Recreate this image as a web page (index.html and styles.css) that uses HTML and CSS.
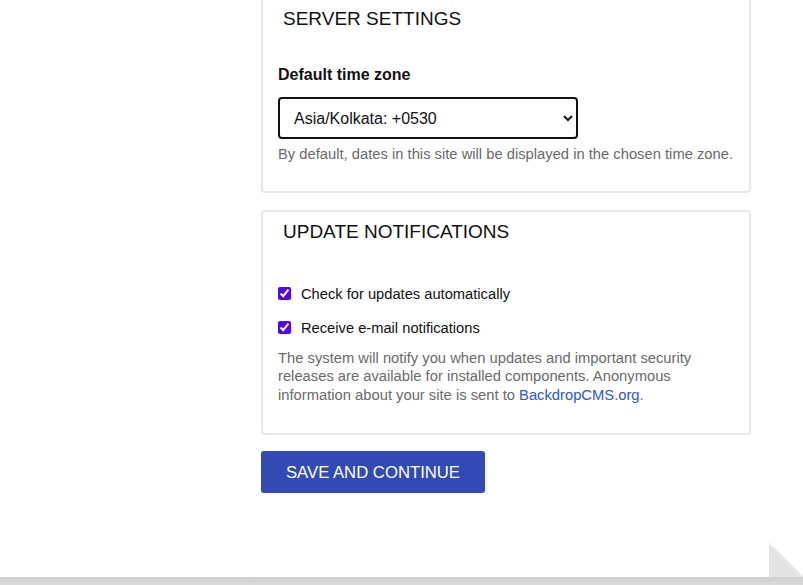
FILE: index.html
```html
<!DOCTYPE html>
<html lang="en">
<head>
<meta charset="utf-8">
<title>Backdrop installer</title>
<link rel="stylesheet" href="styles.css">
</head>
<body>
<div class="page">
  <main class="content">
    <form class="form">
      <div class="panel panel-first">
        <div class="legend">SERVER SETTINGS</div>
        <div class="field">
          <label class="field-label" for="tz">Default time zone</label>
          <select id="tz" class="select">
            <option>Asia/Kolkata: +0530</option>
          </select>
          <p class="desc">By default, dates in this site will be displayed in the chosen time zone.</p>
        </div>
      </div>
      <div class="panel panel-second">
        <div class="legend">UPDATE NOTIFICATIONS</div>
        <div class="checks">
          <label class="check"><input type="checkbox" checked> <span>Check for updates automatically</span></label>
          <label class="check"><input type="checkbox" checked> <span>Receive e-mail notifications</span></label>
        </div>
        <p class="desc desc-notify">The system will notify you when updates and important security releases are available for installed components. Anonymous information about your site is sent to <a href="#" class="link">BackdropCMS.org</a>.</p>
      </div>
      <div class="actions">
        <button type="button" class="btn">SAVE AND CONTINUE</button>
      </div>
    </form>
  </main>
  <footer class="page-bottom">
    <div class="corner-row"><div class="corner"></div></div>
    <div class="bottom-bar"></div>
  </footer>
</div>
</body>
</html>
```

FILE: styles.css
```css
* { box-sizing: border-box; }
html, body { margin: 0; padding: 0; }
body {
  background: #fff;
  font-family: "Liberation Sans", Arial, sans-serif;
  color: #111;
  overflow: hidden;
}
.page {
  height: 585px;
  display: flex;
  flex-direction: column;
}
.content {
  flex: 1;
  padding-left: 261px;
  width: 751px;
}
.form { margin-top: -3px; }
.panel {
  width: 490px;
  border: 2px solid #e8e8e8;
  border-radius: 4px;
  padding: 8px 15px 0 15px;
}
.panel-first { padding-top: 9px; padding-bottom: 27px; }
.panel-second { margin-top: 17px; padding-top: 9px; padding-bottom: 29px; }
.legend {
  font-size: 19px;
  line-height: 22px;
  padding-left: 5px;
  color: #111;
}
.field { margin-top: 35px; }
.field-label {
  display: block;
  font-weight: bold;
  font-size: 16px;
  line-height: 19px;
}
.select {
  display: block;
  margin-top: 13px;
  width: 300px;
  height: 42px;
  border: 2px solid #111;
  border-radius: 4px;
  background: #fff;
  font-family: "Liberation Sans", Arial, sans-serif;
  font-size: 16px;
  color: #111;
  padding: 0 10px;
}
.desc {
  margin: 6px 0 0 0;
  font-size: 14.75px;
  line-height: 18.5px;
  color: #6a6a6a;
}
.checks {
  margin-top: 41px;
  display: flex;
  flex-direction: column;
  gap: 14px;
}
.check {
  display: flex;
  align-items: center;
  height: 20px;
  font-size: 14.7px;
  color: #111;
}
.check input {
  margin: 0 10px 0 0;
  width: 13px;
  height: 13px;
  accent-color: #5206f0;
}
.desc-notify { margin-top: 11px; }
.link { color: #2b57cf; text-decoration: none; }
.actions { margin-top: 16px; }
.btn {
  width: 224px;
  height: 42px;
  background: #334ab5;
  color: #fff;
  border: 0;
  border-radius: 3px;
  font-family: "Liberation Sans", Arial, sans-serif;
  font-size: 16.7px;
  padding: 1px 0 0 0;
}
.page-bottom { display: flex; flex-direction: column; }
.corner-row { display: flex; justify-content: flex-end; }
.corner {
  width: 34px;
  height: 34px;
  background: linear-gradient(to top right, #e4e4e4 50%, #ffffff 50%);
}
.bottom-bar {
  height: 8px;
  background: linear-gradient(to bottom, #cfcfcf, #dadada);
}
```
